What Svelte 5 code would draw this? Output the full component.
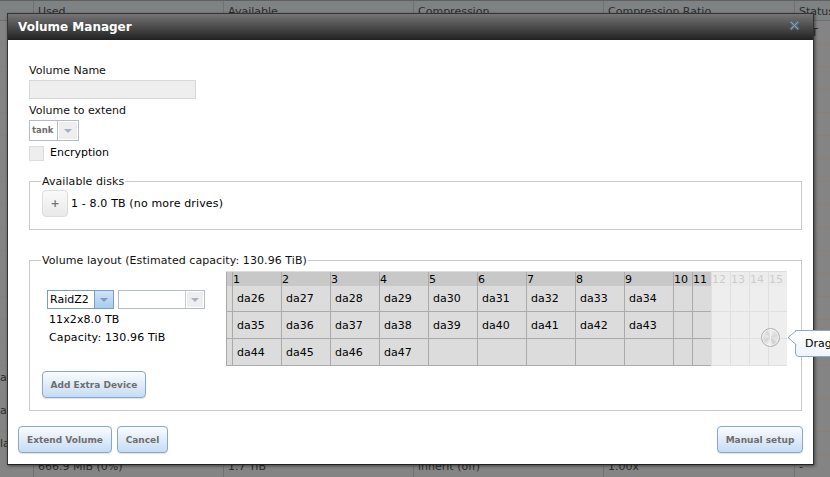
<script>
  const headers = ['', 'Used', 'Available', 'Compression', 'Compression Ratio', 'Status'];
  const rows = Array.from({ length: 19 }, () => ({ cells: ['', '', '', '', '', ''], tall: false }));
  rows[0].cells[5] = 'ALT';
  rows[15] = { cells: ['at', '', '', '', '', ''], tall: true };
  rows[16] = { cells: ['at', '', '', '', '', ''], tall: true };
  rows[17].cells[0] = 'la';
  rows[18].cells = ['', '666.9 MiB (0%)', '1.7 TiB', 'inherit (off)', '1.00x', '-'];

  const disks = [
    ['da26', 'da27', 'da28', 'da29', 'da30', 'da31', 'da32', 'da33', 'da34'],
    ['da35', 'da36', 'da37', 'da38', 'da39', 'da40', 'da41', 'da42', 'da43'],
    ['da44', 'da45', 'da46', 'da47', '', '', '', '', ''],
  ];
  const cols = Array.from({ length: 15 }, (_, i) => i + 1);
  const activeCols = 11;
</script>

<div class="page">
  <div class="bg-table">
    <div class="bg-row bg-head">
      {#each headers as h}<div class="bg-cell">{h}</div>{/each}
    </div>
    {#each rows as row}
      <div class="bg-row" class:tall={row.tall}>
        {#each row.cells as c}<div class="bg-cell">{c}</div>{/each}
      </div>
    {/each}
  </div>

  <div class="modal" role="dialog">
    <div class="titlebar">
      <span class="title">Volume Manager</span>
      <svg class="close" width="11" height="11" viewBox="0 0 11 11">
        <path d="M1.5 1.5 L9.5 9.5 M9.5 1.5 L1.5 9.5" stroke="#5f7286" stroke-width="3" />
        <path d="M2 2 L9 9 M9 2 L2 9" stroke="#8b9cad" stroke-width="1" />
      </svg>
    </div>

    <div class="body">
      <label class="lbl" for="vname">Volume Name</label>
      <input id="vname" class="txt" type="text" disabled />

      <div class="lbl lbl-extend">Volume to extend</div>
      <div class="combo combo-tank">
        <span class="combo-val bold">tank</span>
        <span class="arrow-box"><i class="arrow"></i></span>
      </div>

      <div class="enc">
        <span class="check"></span>
        <span class="enc-label">Encryption</span>
      </div>

      <fieldset class="fs fs-disks">
        <legend>Available disks</legend>
        <div class="disk-row">
          <button class="plus">+</button>
          <span class="disk-text">1 - 8.0 TB (no more drives)</span>
        </div>
      </fieldset>

      <fieldset class="fs fs-layout">
        <legend>Volume layout (Estimated capacity: 130.96 TiB)</legend>
        <div class="layout">
          <div class="left">
            <div class="selects">
              <div class="combo combo-raid">
                <span class="combo-val">RaidZ2</span>
                <span class="arrow-box"><i class="arrow"></i></span>
              </div>
              <div class="combo combo-empty">
                <span class="combo-val"></span>
                <span class="arrow-box"><i class="arrow"></i></span>
              </div>
            </div>
            <div class="size">11x2x8.0 TB</div>
            <div class="cap">Capacity: 130.96 TiB</div>
            <button class="btn btn-extra">Add Extra Device</button>
          </div>

          <div class="grid-wrap">
            <div class="grid">
              <div class="hd gutter"></div>
              {#each cols as c}
                <div class="hd" class:off={c > activeCols}>{c}</div>
              {/each}
              {#each disks as row}
                <div class="cell gutter"></div>
                {#each cols as c}
                  <div class="cell" class:off={c > activeCols}>{row[c - 1] ?? ''}</div>
                {/each}
              {/each}
            </div>
            <div class="knob"></div>
            <div class="tip">
              <svg class="tip-arrow" width="10" height="16" viewBox="0 0 10 16">
                <path d="M9.5 0.5 L1 7.5 L9.5 15" fill="#fff" stroke="#8aa8c6" />
              </svg>
              Drag and drop
            </div>
          </div>
        </div>
      </fieldset>

      <div class="actions">
        <button class="btn btn-extend">Extend Volume</button>
        <button class="btn btn-cancel">Cancel</button>
        <button class="btn btn-manual">Manual setup</button>
      </div>
    </div>
  </div>
</div>

<style>
  :global(body) {
    margin: 0;
    overflow: hidden;
    font-family: "DejaVu Sans", Verdana, sans-serif;
  }

  .page {
    position: relative;
    width: 830px;
    height: 477px;
    overflow: hidden;
    background: #848484;
    font-size: 11px;
    color: #000;
  }

  /* dimmed table behind the dialog */
  .bg-table {
    display: flex;
    flex-direction: column;
    border-top: 1px solid #5f5f5f;
    color: #2c2c2c;
  }
  .bg-row {
    display: grid;
    grid-template-columns: 33px 190px 190px 190px 191px 36px;
    height: 23px;
    box-sizing: border-box;
    border-bottom: 1px solid #8f7f72;
    line-height: 23px;
    flex: none;
  }
  .bg-row.tall {
    height: 33px;
  }
  .bg-head {
    height: 20px;
    background: #7f8283;
    border-bottom: 1px solid #6f6f6f;
    line-height: 13px;
  }
  .bg-cell {
    padding-left: 4px;
    border-left: 1px solid #6f7173;
    white-space: nowrap;
    overflow: hidden;
    box-sizing: border-box;
  }
  .bg-head .bg-cell {
    padding-top: 4px;
  }
  .bg-cell:first-child {
    border-left: 0;
    padding-left: 0;
  }

  .modal {
    position: absolute;
    left: 7px;
    top: 13px;
    width: 807px;
    height: 452px;
    box-sizing: border-box;
    background: #fff;
    border: 1px solid #333;
    border-bottom-color: #222;
    box-shadow: 1px 1px 3px rgba(0, 0, 0, 0.5);
    display: flex;
    flex-direction: column;
  }

  .titlebar {
    height: 26px;
    flex: none;
    display: flex;
    align-items: center;
    justify-content: space-between;
    padding: 0 13px 0 10px;
    background: linear-gradient(#757575, #212121);
  }
  .title {
    color: #fff;
    font-weight: bold;
    font-size: 12px;
  }
  .close {
    margin-top: -3px;
  }

  .body {
    flex: 1;
    display: flex;
    flex-direction: column;
    padding: 24px 11px 0 21px;
    position: relative;
  }

  .lbl {
    display: block;
    height: 14px;
    line-height: 14px;
    color: #111;
  }
  .txt {
    width: 167px;
    height: 19px;
    box-sizing: border-box;
    margin: 2px 0 0;
    padding: 0;
    background: #eee;
    border: 1px solid #d8d8d8;
  }
  .lbl-extend {
    margin-top: 5px;
  }

  .combo {
    display: flex;
    box-sizing: border-box;
    border: 1px solid #b4bccb;
    background: #fff;
  }
  .combo-val {
    flex: 1;
    padding-left: 2px;
    line-height: 17px;
  }
  .bold {
    font-weight: bold;
    color: #6d6d6d;
    font-size: 8.5px;
  }
  .arrow-box {
    flex: none;
    display: flex;
    align-items: center;
    justify-content: center;
    box-sizing: border-box;
    border-left: 1px solid #b4bccb;
    background: #eee;
    box-shadow: inset 0 0 0 1px #fff;
  }
  .arrow {
    width: 0;
    height: 0;
    border-left: 4px solid transparent;
    border-right: 4px solid transparent;
    border-top: 4px solid #a3b0c8;
  }
  .combo-tank {
    width: 50px;
    height: 21px;
    margin-top: 2px;
  }
  .combo-tank .combo-val {
    line-height: 19px;
  }
  .combo-tank .arrow-box {
    width: 21px;
  }

  .enc {
    display: flex;
    gap: 6px;
    margin-top: 5px;
    height: 15px;
  }
  .enc-label {
    line-height: 13px;
  }
  .check {
    width: 15px;
    height: 15px;
    box-sizing: border-box;
    background: #eee;
    border: 1px solid #dcdcdc;
  }

  .fs {
    margin: 0;
    padding: 0;
    border: 1px solid #c8c8c8;
    min-width: 0;
    width: 773px;
    box-sizing: border-box;
    position: relative;
  }
  .fs legend {
    margin-left: 11px;
    padding: 2px 1px 0;
    line-height: 14px;
    color: #111;
    letter-spacing: 0.07px;
  }
  .fs-disks {
    margin-top: 12px;
    height: 57px;
  }
  .disk-row {
    display: flex;
    align-items: center;
    gap: 3px;
    padding: 1px 0 0 12px;
  }
  .disk-text {
    letter-spacing: 0.15px;
  }
  .plus {
    width: 26px;
    height: 27px;
    padding: 0;
    border: 1px solid #ddd;
    border-radius: 4px;
    background: linear-gradient(#fafafa, #e9e9e9);
    color: #777;
    font: bold 11px "DejaVu Sans", sans-serif;
  }

  .fs-layout {
    margin-top: 22px;
    height: 159px;
  }
  .layout {
    display: flex;
    padding-top: 3px;
  }
  .left {
    width: 196px;
    flex: none;
    padding: 19px 0 0 12px;
    box-sizing: border-box;
    display: flex;
    flex-direction: column;
  }
  .selects {
    display: flex;
    gap: 4px;
    margin-left: 5px;
  }
  .combo-raid {
    width: 67px;
    height: 19px;
    border-color: #7d9dc0;
  }
  .combo-raid .arrow-box {
    width: 19px;
    border-left-color: #7d9dc0;
    background: linear-gradient(#cfe2f7, #a9ccf0);
    box-shadow: none;
  }
  .combo-raid .arrow {
    border-top-color: #8399b8;
  }
  .combo-empty {
    width: 87px;
    height: 19px;
  }
  .combo-empty .arrow-box {
    width: 19px;
    border-left-color: #ccc;
  }
  .size {
    margin: 4px 0 0 7px;
    line-height: 14px;
    letter-spacing: 0.1px;
  }
  .cap {
    margin: 4px 0 0 7px;
    line-height: 14px;
    letter-spacing: 0.15px;
  }

  .btn {
    padding: 0;
    height: 27px;
    box-sizing: border-box;
    border: 1px solid #8aa8c6;
    border-radius: 4px;
    background: linear-gradient(#fafcfe, #c6dcf4);
    color: #6e6e6e;
    font: bold 9px "DejaVu Sans", sans-serif;
    box-shadow: 0 1px 1px rgba(0, 0, 0, 0.12);
  }
  .btn-extra {
    width: 104px;
    margin-top: 26px;
  }

  .grid-wrap {
    position: relative;
    flex: none;
  }
  .grid {
    display: grid;
    grid-template-columns: 6px repeat(9, 49px) repeat(6, 19px);
    grid-template-rows: 14px 26px 27px 27px;
    border-top: 1px solid #ddd;
  }
  .hd {
    background: #c8c8c8;
    border-left: 1px solid #aaa;
    box-sizing: border-box;
    line-height: 15px;
    white-space: nowrap;
    overflow: hidden;
  }
  .hd.off {
    background: #ececec;
    border-left-color: #e0e0e0;
    color: #ccc;
  }
  .cell {
    display: flex;
    align-items: center;
    background: #dcdcdc;
    border-left: 1px solid #aaa;
    border-bottom: 1px solid #aaa;
    box-sizing: border-box;
    padding-left: 4px;
    white-space: nowrap;
    overflow: hidden;
  }
  .cell.off {
    background: #eee;
    border-left-color: #e0e0e0;
    border-bottom-color: #e0e0e0;
  }
  .gutter {
    padding: 0;
    background: #c8c8c8;
    border-left: 1px solid #aaa;
  }
  .cell.gutter {
    background: #dcdcdc;
  }

  .knob {
    position: absolute;
    left: 535px;
    top: 57px;
    width: 19px;
    height: 19px;
    box-sizing: border-box;
    border: 1px solid #b0b0b0;
    border-radius: 50%;
    background: conic-gradient(#f2f2f2 0deg, #d8d8d8 60deg, #e4e4e4 110deg, #cfcfcf 150deg, #f4f4f4 185deg, #d4d4d4 240deg, #e8e8e8 290deg, #d4d4d4 330deg, #f2f2f2 360deg);
    box-shadow: inset 0 0 0 1px rgba(255, 255, 255, 0.6);
  }
  .tip {
    position: absolute;
    left: 569px;
    top: 59px;
    height: 27px;
    box-sizing: border-box;
    padding: 0 8px 0 9px;
    line-height: 25px;
    white-space: nowrap;
    background: linear-gradient(#fff, #edf4fc);
    border: 1px solid #8aa8c6;
    border-radius: 0 4px 4px 4px;
  }
  .tip-arrow {
    position: absolute;
    left: -9px;
    top: -1px;
  }

  .actions {
    display: flex;
    gap: 5px;
    margin: 15px 0 0 -11px;
    width: 785px;
  }
  .btn-extend {
    width: 94px;
  }
  .btn-cancel {
    width: 51px;
  }
  .btn-manual {
    width: 86px;
    margin-left: auto;
  }
</style>
